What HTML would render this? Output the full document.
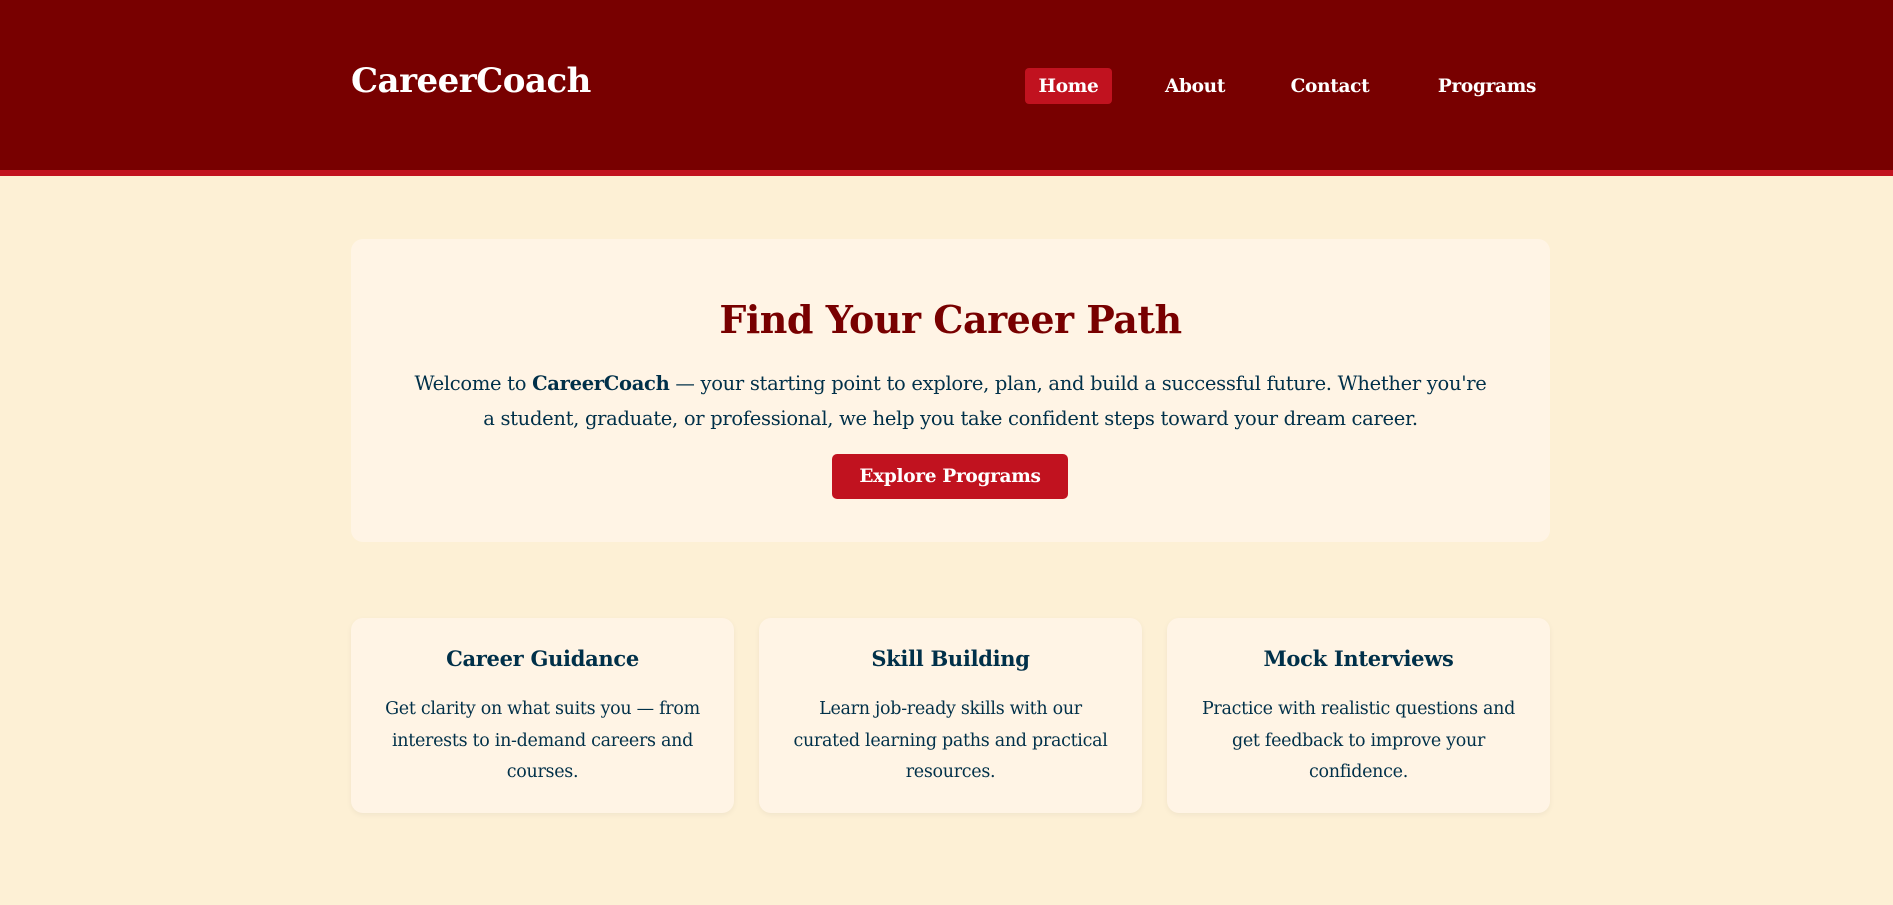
<!DOCTYPE html>
<html><head><meta charset="utf-8"><style>
*{margin:0;padding:0;box-sizing:border-box}
html,body{width:1893px;height:905px;overflow:hidden}
body{background:#fdf0d5;font-family:"DejaVu Serif","Liberation Serif",serif;color:#003049;position:relative}
header{position:absolute;left:0;top:0;width:1893px;height:176px;background:#780000;border-bottom:6px solid #c1121f}
.logo{position:absolute;left:351px;top:61px;font-size:34px;font-weight:bold;color:#fff;letter-spacing:-0.5px}
.nav a{position:absolute;top:68px;height:36px;line-height:37px;font-size:18.5px;font-weight:bold;color:#fff;text-decoration:none;text-align:center;border-radius:4px;letter-spacing:-0.3px}
.hero{position:absolute;left:351px;top:239px;width:1199px;height:303px;background:#fff4e5;border-radius:12px;text-align:center}
.hero h1{position:absolute;top:58px;width:100%;font-size:38px;color:#780000;letter-spacing:-0.5px}
.hero p{position:absolute;top:127px;left:62px;right:62px;font-size:19.5px;line-height:35px;letter-spacing:-0.3px}
.btn{position:absolute;left:481px;top:215px;width:236px;height:45px;line-height:45px;background:#c1121f;color:#fff;font-weight:bold;font-size:18.5px;border-radius:5px;letter-spacing:-0.3px}
.card{position:absolute;top:618px;width:383px;height:195px;background:#fff4e5;border-radius:12px;text-align:center;box-shadow:0 2px 6px rgba(0,0,0,0.05)}
.card h3{position:absolute;top:28px;width:100%;font-size:21px;letter-spacing:-0.3px}
.card p{position:absolute;top:76px;left:26px;right:26px;font-size:17.5px;line-height:31.5px;letter-spacing:-0.3px}
</style></head><body>
<header>
<div class="logo">CareerCoach</div>
<div class="nav">
<a style="left:1025px;width:87px;background:#c1121f">Home</a>
<a style="left:1158px;width:74px">About</a>
<a style="left:1285px;width:90px">Contact</a>
<a style="left:1430px;width:114px">Programs</a>
</div>
</header>
<div class="hero">
<h1>Find Your Career Path</h1>
<p>Welcome to <b>CareerCoach</b> — your starting point to explore, plan, and build a successful future. Whether you're a student, graduate, or professional, we help you take confident steps toward your dream career.</p>
<div class="btn">Explore Programs</div>
</div>
<div class="card" style="left:351px"><h3>Career Guidance</h3><p>Get clarity on what suits you — from interests to in-demand careers and courses.</p></div>
<div class="card" style="left:759px"><h3>Skill Building</h3><p>Learn job-ready skills with our curated learning paths and practical resources.</p></div>
<div class="card" style="left:1167px"><h3>Mock Interviews</h3><p>Practice with realistic questions and get feedback to improve your confidence.</p></div>
</body></html>
